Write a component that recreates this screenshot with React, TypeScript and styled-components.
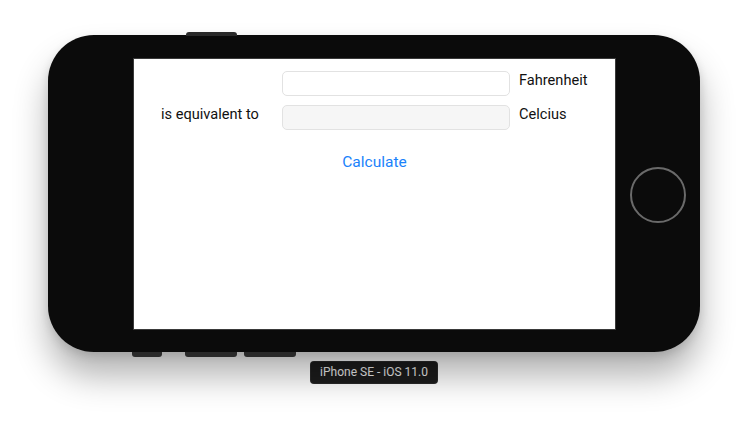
import React from "react";
import styled, { createGlobalStyle } from "styled-components";

const Global = createGlobalStyle`
  html, body { margin: 0; padding: 0; background: #ffffff; }
  body { font-family: Roboto, "Liberation Sans", sans-serif; }
`;

const Page = styled.div`
  width: 750px;
  height: 429px;
  display: flex;
  flex-direction: column;
  align-items: flex-start;
  padding: 35px 0 0 48px;
  box-sizing: border-box;
  overflow: hidden;
`;

const Stage = styled.div`
  display: flex;
  flex-direction: column;
  align-items: center;
  width: 652px;
`;

const Phone = styled.div`
  position: relative;
  width: 652px;
  height: 317px;
  box-sizing: border-box;
  background: #0b0b0b;
  border-radius: 46px;
  display: flex;
  align-items: stretch;
  padding: 23px 0 22px 85px;
  box-shadow: 0 24px 34px rgba(0, 0, 0, 0.3), 0 4px 10px rgba(0, 0, 0, 0.12);
`;

const SideButton = styled.div<{ $left: number; $width: number; $top?: boolean }>`
  position: absolute;
  left: ${(p) => p.$left}px;
  width: ${(p) => p.$width}px;
  height: 4px;
  background: #2a2a2a;
  ${(p) =>
    p.$top
      ? "top: -3px; border-radius: 3px 3px 0 0;"
      : "bottom: -5px; height: 5px; border-radius: 0 0 3px 3px;"}
`;

const Screen = styled.div`
  width: 483px;
  height: 272px;
  flex-shrink: 0;
  box-sizing: border-box;
  background: #ffffff;
  border: 1px solid #3a3a3a;
  display: flex;
  flex-direction: column;
  align-items: stretch;
  padding-top: 12px;
`;

const Form = styled.div`
  display: grid;
  grid-template-columns: 148px 228px auto;
  grid-auto-rows: 25px;
  row-gap: 9px;
  align-items: center;
`;

const LeftLabel = styled.div`
  font-size: 14.6px;
  color: #111;
  padding-left: 27px;
  margin-top: -7px;
`;

const UnitLabel = styled.div`
  font-size: 14.6px;
  color: #111;
  padding-left: 9px;
  margin-top: -7px;
`;

const Field = styled.div<{ $readonly?: boolean }>`
  height: 25px;
  box-sizing: border-box;
  border: 1px solid #e2e2e2;
  border-radius: 5px;
  background: ${(p) => (p.$readonly ? "#f6f6f6" : "#ffffff")};
`;

const CalcButton = styled.div`
  align-self: center;
  margin-top: 22px;
  font-size: 15.5px;
  color: #1a82fb;
  line-height: 20px;
`;

const RightBezel = styled.div`
  width: 84px;
  flex-shrink: 0;
  display: flex;
  align-items: center;
  justify-content: center;
`;

const HomeButton = styled.div`
  width: 52px;
  height: 52px;
  border-radius: 50%;
  border: 2px solid #6a6a6a;
  margin-top: 1px;
`;

const DeviceLabel = styled.div`
  margin-top: 9px;
  background: #1c1c1c;
  color: #eaeaea;
  font-size: 12px;
  line-height: 23px;
  height: 23px;
  padding: 0 10px;
  border-radius: 4px;
  box-shadow: 0 0 0 1px rgba(255, 255, 255, 0.06) inset;
`;

export default function App() {
  return (
    <>
      <Global />
      <Page>
        <Stage>
          <Phone>
            <SideButton $top $left={138} $width={51} />
            <SideButton $left={84} $width={30} />
            <SideButton $left={137} $width={52} />
            <SideButton $left={196} $width={52} />
            <Screen>
              <Form>
                <span />
                <Field />
                <UnitLabel>Fahrenheit</UnitLabel>
                <LeftLabel>is equivalent to</LeftLabel>
                <Field $readonly />
                <UnitLabel>Celcius</UnitLabel>
              </Form>
              <CalcButton>Calculate</CalcButton>
            </Screen>
            <RightBezel>
              <HomeButton />
            </RightBezel>
          </Phone>
          <DeviceLabel>iPhone SE - iOS 11.0</DeviceLabel>
        </Stage>
      </Page>
    </>
  );
}
